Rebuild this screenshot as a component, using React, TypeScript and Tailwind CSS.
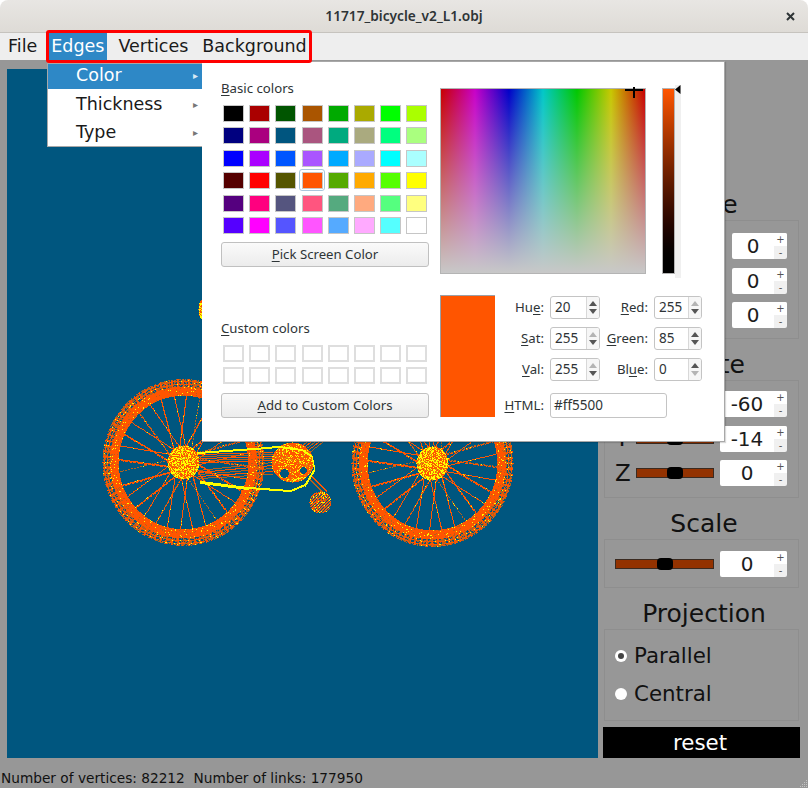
import { ReactNode } from 'react';

const BASIC = [
  '#000000', '#aa0000', '#005500', '#aa5500', '#00aa00', '#aaaa00', '#00ff00', '#aaff00',
  '#00007f', '#aa007f', '#00557f', '#aa557f', '#00aa7f', '#aaaa7f', '#00ff7f', '#aaff7f',
  '#0000ff', '#aa00ff', '#0055ff', '#aa55ff', '#00aaff', '#aaaaff', '#00ffff', '#aaffff',
  '#550000', '#ff0000', '#555500', '#ff5500', '#55aa00', '#ffaa00', '#55ff00', '#ffff00',
  '#55007f', '#ff007f', '#55557f', '#ff557f', '#55aa7f', '#ffaa7f', '#55ff7f', '#ffff7f',
  '#5500ff', '#ff00ff', '#5555ff', '#ff55ff', '#55aaff', '#ffaaff', '#55ffff', '#ffffff',
];

// wireframe is plotted pixel by pixel, one path per colour
function buildBike() {
  let seed = 11717;
  const rnd = () => {
    seed = (seed * 16807) % 2147483647;
    return seed / 2147483647;
  };
  const O = '#ff5500';
  const Y = '#ffff00';
  const B = '#b5601c';
  const G = '#d89a10';
  const px = new Map<string, string>();
  const plot = (x: number, y: number, c: string) => px.set(`${Math.round(x)},${Math.round(y)}`, c);
  const line = (x0: number, y0: number, x1: number, y1: number, c: string, w = 1, gap = 0) => {
    const n = Math.ceil(Math.hypot(x1 - x0, y1 - y0));
    for (let i = 0; i <= n; i++) {
      if (gap && i % gap === 0) continue;
      const x = x0 + ((x1 - x0) * i) / n;
      const y = y0 + ((y1 - y0) * i) / n;
      for (let k = 0; k < w; k++) plot(x, y + k, c);
    }
  };
  const blob = (cx: number, cy: number, rx: number, ry: number, yellow = 0.42) => {
    for (let y = -ry; y <= ry; y++) {
      for (let x = -rx; x <= rx; x++) {
        if ((x * x) / (rx * rx) + (y * y) / (ry * ry) > 1) continue;
        const r = rnd();
        plot(cx + x, cy + y, r < yellow ? Y : r < 0.87 ? O : G);
      }
    }
  };
  const wheel = (cx: number, cy: number) => {
    for (let i = 0; i < 32; i++) {
      const a = (i / 32) * Math.PI * 2 + 0.05;
      const t = a + (i % 2 ? 0.38 : -0.38);
      const x0 = cx + Math.cos(t) * 13;
      const y0 = cy + Math.sin(t) * 13;
      const x1 = cx + Math.cos(a) * 68;
      const y1 = cy + Math.sin(a) * 70;
      const dim = i % 5 === 0;
      line(x0, y0, x1, y1, dim ? B : O, 1, dim ? 3 : 0);
      if (i % 2 === 0) line(x0, y0 + 1, x1, y1 + 1, O, 1, 4);
      for (let k = 0; k < 3; k++) {
        const f = rnd();
        plot(x0 + (x1 - x0) * f, y0 + (y1 - y0) * f, Y);
      }
    }
    for (let y = -85; y <= 85; y++) {
      for (let x = -82; x <= 82; x++) {
        const d = Math.hypot(x / 81, y / 83.5);
        if (d > 1 || d < 0.8) continue;
        const a = Math.atan2(y, x);
        const mesh = (Math.round(a * 42) % 3 === 0 ? 1 : 0) + (Math.round(d * 83) % 3 === 0 ? 1 : 0);
        const r = rnd();
        if (d < 0.9) {
          // inner band is almost solid
          if (r < 0.05) plot(cx + x, cy + y, Y);
          else if (r < 0.85 || mesh) plot(cx + x, cy + y, O);
          else plot(cx + x, cy + y, B);
        } else if (mesh) {
          plot(cx + x, cy + y, r < 0.07 ? Y : r < 0.8 ? O : B);
        } else if (r < 0.5) {
          plot(cx + x, cy + y, B);
        }
      }
    }
    blob(cx, cy, 16, 17);
  };

  // seat, mostly behind the dialog
  blob(208, 309, 10, 14);

  // rear stays
  for (let i = 0; i < 5; i++) {
    line(198, 454 + i * 2, 272, 452 + i * 2, i % 2 ? B : O);
    line(198, 470 + i * 2, 272, 462 + i * 3, i % 2 ? O : B);
  }
  // front frame going up behind the dialog
  for (let i = 0; i < 5; i++) line(288 + i * 4, 456, 306 + i * 4, 442, i % 2 ? O : B);

  wheel(183, 462);
  wheel(432, 463);

  // chainring with its cut-outs, crank and pedal
  blob(292, 462, 21, 20, 0.18);
  for (let y = -4; y <= 4; y++) {
    for (let x = -5; x <= 5; x++) {
      if (x * x + y * y < 20) px.delete(`${284 + x},${473 + y}`);
      if (x * x + y * y < 12) px.delete(`${303 + x},${470 + y}`);
    }
  }
  line(309, 478, 323, 492, B, 2);
  line(312, 476, 326, 490, O, 2);
  for (let y = 0; y < 22; y++) {
    for (let x = 0; x < 22; x++) {
      const d = Math.hypot((x - 11) / 11, (y - 11) / 11);
      if (d > 1) continue;
      const r = rnd();
      if ((x + y) % 3 !== 0 || r < 0.3) plot(309 + x, 491 + y, r < 0.16 ? Y : r < 0.78 ? O : B);
    }
  }
  // chain
  line(197, 452, 254, 448, Y, 2);
  line(254, 448, 278, 446, Y, 2);
  line(278, 446, 302, 449, Y, 2);
  line(302, 449, 312, 456, Y, 2);
  line(312, 456, 314, 468, Y, 3);
  line(314, 468, 305, 484, Y, 3);
  line(305, 484, 290, 490, Y, 2);
  line(290, 490, 248, 487, Y, 2);
  line(248, 487, 200, 481, Y, 3);

  const groups: Record<string, string> = {};
  px.forEach((c, k) => {
    const [x, y] = k.split(',');
    groups[c] = (groups[c] || '') + `M${x} ${y}h1v1h-1z`;
  });
  return groups;
}

const BIKE = buildBike();

function Bike() {
  return (
    <svg viewBox="7 69 591 689" className="block w-full h-full" shapeRendering="crispEdges">
      {Object.entries(BIKE).map(([c, d]) => (
        <path key={c} d={d} fill={c} />
      ))}
    </svg>
  );
}

function SmallSpin({ value, width }: { value: string; width: string }) {
  return (
    <div className={`${width} h-[26px] flex rounded-[2px] overflow-hidden shrink-0`}>
      <div className="flex-1 bg-white flex items-center justify-center text-[20px] text-[#1c1c1c]">{value}</div>
      <div className="w-[13px] bg-[#f0f0f0] flex flex-col items-center text-[10px] leading-[13px] text-[#555555]">
        <span className="h-[13px] bg-white w-full text-center">+</span>
        <span className="h-[13px] w-full text-center">-</span>
      </div>
    </div>
  );
}

function Slider({ handle }: { handle: string }) {
  return (
    <div className="relative flex-1 h-[10px] bg-[#933200] border border-[#3a2a20]">
      <div className={`absolute top-[-2px] h-[12px] w-[16px] bg-black rounded-[4px] ${handle}`} />
    </div>
  );
}

function AxisRow({ axis, handle, value, wide }: { axis: string; handle: string; value: string; wide?: boolean }) {
  return (
    <div className="flex items-center h-[26px] pr-[11px]">
      <span className="w-[31px] pl-[10px] text-[23px] leading-none text-[#111111]">{axis}</span>
      <Slider handle={handle} />
      <div className={wide ? 'ml-[6px]' : 'ml-[18px]'}>
        <SmallSpin value={value} width={wide ? 'w-[67px]' : 'w-[55px]'} />
      </div>
    </div>
  );
}

function Group({ title, box, children }: { title: string; box: string; children: ReactNode }) {
  return (
    <>
      <div className="h-[41px] flex items-center justify-center pt-[10px] pl-[5px] text-[25px] text-[#111111]">
        {title}
      </div>
      <div className={`${box} border border-[#8e8e8e] mx-[1px]`}>{children}</div>
    </>
  );
}

function Radio({ label, checked }: { label: string; checked?: boolean }) {
  return (
    <div className="flex items-center gap-[7px] h-[38px] pl-[10px] text-[21.33px] text-[#111111]">
      <span className="w-[12px] h-[12px] rounded-full bg-white flex items-center justify-center">
        {checked && <span className="w-[6px] h-[6px] rounded-full bg-[#444444]" />}
      </span>
      {label}
    </div>
  );
}

function Swatch({ color }: { color: string }) {
  return <div className="h-[17px] border border-[#c6c6c6]" style={{ backgroundColor: color }} />;
}

function QtButton({ mark, rest }: { mark: string; rest: string }) {
  return (
    <button className="w-[208px] h-[25px] rounded-[3px] border border-[#c0c0c0] bg-gradient-to-b from-[#fafafa] to-[#ececec] text-[13.2px] text-[#2e3436] block">
      <u className="underline-offset-2">{mark}</u>
      {rest}
    </button>
  );
}

function Arrows({ up, down }: { up?: boolean; down?: boolean }) {
  return (
    <div className="w-[13px] border-l border-[#d8d8d8] bg-[#f6f6f6] flex flex-col items-center justify-center gap-[3px]">
      <svg width="8" height="5" viewBox="0 0 8 5">
        <path d="M4 0L8 5H0z" fill={up ? '#555555' : '#b4b4b4'} />
      </svg>
      <svg width="8" height="5" viewBox="0 0 8 5">
        <path d="M0 0H8L4 5z" fill={down ? '#555555' : '#b4b4b4'} />
      </svg>
    </div>
  );
}

function DialogSpin({ value, width, up, down }: { value: string; width: string; up?: boolean; down?: boolean }) {
  return (
    <div className={`${width} h-[23px] flex border border-[#c4c4c4] rounded-[3px] overflow-hidden bg-white shrink-0`}>
      <div className="flex-1 pl-[4px] text-[13.5px] leading-[21px] text-[#2e3436]">{value}</div>
      <Arrows up={up} down={down} />
    </div>
  );
}

function FormRow({
  left,
  leftMark,
  leftEnd,
  leftVal,
  right,
  rightMark,
  rightEnd,
  rightVal,
  flags,
}: {
  left: string;
  leftMark: string;
  leftEnd: string;
  leftVal: string;
  right: string;
  rightMark: string;
  rightEnd: string;
  rightVal: string;
  flags: [boolean, boolean, boolean, boolean];
}) {
  return (
    <div className="flex items-center h-[23px] text-[13.2px] text-[#2e3436]">
      <span className="w-[49px] text-right">
        {left}
        <u className="underline-offset-2">{leftMark}</u>
        {leftEnd}
      </span>
      <span className="ml-[6px]">
        <DialogSpin value={leftVal} width="w-[50px]" up={flags[0]} down={flags[1]} />
      </span>
      <span className="w-[48px] text-right">
        {right}
        <u className="underline-offset-2">{rightMark}</u>
        {rightEnd}
      </span>
      <span className="ml-[6px]">
        <DialogSpin value={rightVal} width="w-[48px]" up={flags[2]} down={flags[3]} />
      </span>
    </div>
  );
}

function ColorDialog() {
  return (
    <div className="absolute left-[202px] top-[61px] w-[523px] h-[381px] bg-white border-r border-b border-t border-[#a8a8a8] flex font-['Noto_Sans',sans-serif] text-[#2e3436] shadow-[1px_1px_1px_rgba(0,0,0,0.15)]">
      <div className="ml-[19px] w-[208px]">
        <div className="mt-[17px] h-[18px] text-[13.2px] leading-[18px]">
          <u className="underline-offset-2">B</u>asic colors
        </div>
        <div className="relative mt-[8px] ml-[2px] grid grid-cols-[repeat(8,21px)] gap-x-[5.2px] gap-y-[5.4px]">
          {BASIC.map((c, i) => (
            <Swatch key={i} color={c} />
          ))}
          <div className="absolute left-[76px] top-[64px] w-[26px] h-[22px] rounded-[3px] border border-[#a9c6dc]" />
        </div>
        <div className="mt-[8px]">
          <QtButton mark="P" rest="ick Screen Color" />
        </div>
        <div className="mt-[52px] h-[18px] text-[13.2px] leading-[18px]">
          <u className="underline-offset-2">C</u>ustom colors
        </div>
        <div className="mt-[8px] ml-[2px] grid grid-cols-[repeat(8,21px)] gap-x-[5.2px] gap-y-[5px]">
          {Array.from({ length: 16 }).map((_, i) => (
            <div key={i} className="h-[17px] border-2 border-[#dedede]" />
          ))}
        </div>
        <div className="mt-[9px]">
          <QtButton mark="A" rest="dd to Custom Colors" />
        </div>
      </div>

      <div className="ml-[11px] flex-1">
        <div className="mt-[26px] flex">
          <div className="relative w-[206px] h-[186px] border border-[#b4b4b4] bg-[linear-gradient(to_bottom,transparent,#c8c8c8),linear-gradient(to_right,#c80000,#c800c8,#0000c8,#00c8c8,#00c800,#c8c800,#c80000)]">
            <div className="absolute left-[184px] top-0 w-[18px] h-[2px] bg-black" />
            <div className="absolute left-[192px] top-[-2px] w-[2px] h-[11px] bg-black" />
          </div>
          <div className="ml-[16px] w-[13px] h-[186px] border border-[#b4b4b4] bg-gradient-to-b from-[#ff5500] to-black" />
          <div className="relative w-[6px] h-[193px] -mt-[3px] bg-[#f0f0f0]">
            <svg className="absolute left-0 top-0" width="6" height="9" viewBox="0 0 6 9">
              <path d="M0 4.5L5.5 0V9z" fill="#000000" />
            </svg>
          </div>
        </div>
        <div className="mt-[17px] flex">
          <div className="w-[55px] h-[122px] bg-[#ff5500] border-l border-t border-[#9aa0a8]" />
          <div className="pt-[1px]">
            <div className="flex flex-col gap-[8px]">
              <FormRow
                left="Hu"
                leftMark="e"
                leftEnd=":"
                leftVal="20"
                right=""
                rightMark="R"
                rightEnd="ed:"
                rightVal="255"
                flags={[true, true, false, true]}
              />
              <FormRow
                left=""
                leftMark="S"
                leftEnd="at:"
                leftVal="255"
                right=""
                rightMark="G"
                rightEnd="reen:"
                rightVal="85"
                flags={[false, true, true, true]}
              />
              <FormRow
                left=""
                leftMark="V"
                leftEnd="al:"
                leftVal="255"
                right="Bl"
                rightMark="u"
                rightEnd="e:"
                rightVal="0"
                flags={[false, true, true, false]}
              />
            </div>
            <div className="mt-[12px] flex items-center text-[13.2px]">
              <span className="w-[49px] text-right">
                <u className="underline-offset-2">H</u>TML:
              </span>
              <div className="ml-[6px] w-[117px] h-[25px] border border-[#c4c4c4] rounded-[3px] pl-[3px] text-[13.5px] leading-[23px]">
                #ff5500
              </div>
            </div>
          </div>
        </div>
      </div>
    </div>
  );
}

function EdgesMenu() {
  return (
    <div className="absolute left-[47px] top-[63px] w-[156px] h-[84px] bg-white border border-[#a8a8a8] text-[17.5px] text-[#1a1a1a]">
      <div className="h-[25px] pb-[3px] bg-[#2e88c6] text-white flex items-center justify-between pl-[28px] pr-[4px]">
        Color <span className="text-[10px] text-[#d8e8f4]">▸</span>
      </div>
      <div className="h-[30px] flex items-center justify-between pl-[28px] pr-[4px]">
        Thickness <span className="text-[10px] text-[#777777]">▸</span>
      </div>
      <div className="h-[27px] flex items-center justify-between pl-[28px] pr-[4px]">
        Type <span className="text-[10px] text-[#777777]">▸</span>
      </div>
    </div>
  );
}

export default function App() {
  return (
    <div className="relative w-[808px] h-[788px] overflow-hidden bg-white font-['DejaVu_Sans',sans-serif]">
      <div className="h-[33px] pt-[1px] rounded-t-[8px] bg-gradient-to-b from-[#e8e6e3] to-[#dedbd6] border-b border-[#c6c3be] flex items-center justify-center relative">
        <span className="font-['Noto_Sans',sans-serif] font-semibold text-[13.7px] text-[#2e3436]">
          11717_bicycle_v2_L1.obj
        </span>
        <svg className="absolute right-[13px] top-[12px] w-[9px] h-[9px]" viewBox="0 0 9 9">
          <path d="M1 1L8 8M8 1L1 8" stroke="#2e3436" strokeWidth="2" />
        </svg>
      </div>

      <div className="h-[27px] bg-[#eeeeee] flex items-stretch pl-[5px] gap-[8px] text-[17.5px] text-[#1a1a1a]">
        <span className="px-[3px] flex items-center">File</span>
        <span className="px-[3px] flex items-center bg-[#2e88c6] text-white">Edges</span>
        <span className="px-[3px] flex items-center">Vertices</span>
        <span className="px-[3px] flex items-center">Background</span>
      </div>

      <div className="h-[708px] bg-[#979797] flex pl-[7px] pt-[9px]">
        <div className="w-[591px] h-[689px] bg-[#00567f]">
          <Bike />
        </div>
        <div className="ml-[5px] w-[197px] h-[689px] flex flex-col justify-end">
          <Group title="Move" box="h-[119px] pt-[12px] flex flex-col gap-[8.5px]">
            <AxisRow axis="X" handle="left-[30px]" value="0" />
            <AxisRow axis="Y" handle="left-[30px]" value="0" />
            <AxisRow axis="Z" handle="left-[30px]" value="0" />
          </Group>
          <Group title="Rotate" box="h-[118px] pt-[10px] flex flex-col gap-[8.5px]">
            <AxisRow axis="X" handle="left-[8px]" value="-60" wide />
            <AxisRow axis="Y" handle="left-[30px]" value="-14" wide />
            <AxisRow axis="Z" handle="left-[30px]" value="0" wide />
          </Group>
          <Group title="Scale" box="h-[49px] pl-[10px] pr-[11px] flex items-center">
            <Slider handle="left-[41px]" />
            <div className="ml-[6px]">
              <SmallSpin value="0" width="w-[67px]" />
            </div>
          </Group>
          <Group title="Projection" box="h-[92px] pt-[7px]">
            <Radio label="Parallel" checked />
            <Radio label="Central" />
          </Group>
          <div className="mt-[6px] h-[31px] pr-[3px] bg-black text-white text-[21.33px] flex items-center justify-center">
            reset
          </div>
        </div>
      </div>

      <div className="h-[20px] bg-[#979797] pl-[1px] text-[13.7px] leading-[20px] text-[#111111] whitespace-pre">
        Number of vertices: 82212  Number of links: 177950
      </div>

      <svg className="absolute right-0 bottom-0" width="9" height="9" viewBox="0 0 9 9">
        <path d="M7 1h1v1h-1zM5 3h1v1h-1zM7 3h1v1h-1zM3 5h1v1h-1zM5 5h1v1h-1zM7 5h1v1h-1zM1 7h1v1h-1zM3 7h1v1h-1zM5 7h1v1h-1zM7 7h1v1h-1z" fill="#c4c4c4" />
      </svg>

      <EdgesMenu />
      <ColorDialog />
      <div className="absolute left-[46px] top-[30px] w-[266px] h-[33px] border-[3px] border-[#ff0000] rounded-[3px]" />
    </div>
  );
}
